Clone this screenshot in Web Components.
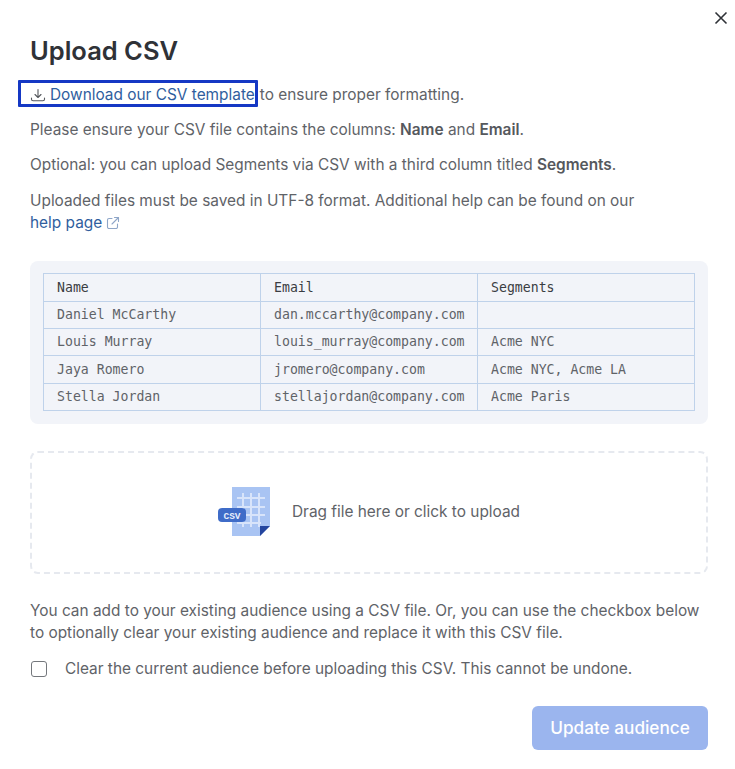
<!DOCTYPE html>
<html><head><meta charset="utf-8">
<style>
html,body{margin:0;padding:0;background:#fff}
body{width:735px;height:769px;overflow:hidden;font-family:Inter,"Liberation Sans",sans-serif}
</style></head><body>
<upload-dialog>
  <span slot="title">Upload CSV</span>
</upload-dialog>
<template id="dlg">
<style>
:host{display:block;position:relative;width:735px;height:769px;box-sizing:border-box;padding:35px 27px 0 30px;color:#5f6368;font:15.4px/22px Inter,"Liberation Sans",sans-serif;letter-spacing:0}
h1{margin:0;font-size:25.500px;line-height:32px;font-weight:600;color:#2f3237}
.close{position:absolute;top:11px;right:7px;width:14px;height:14px;display:block}
p{margin:0}
.l1{margin-top:17px;height:22px;display:flex;align-items:center}
a{color:#2f5e9e;text-decoration:none}
.dl{position:relative;display:flex;align-items:center;gap:4px;white-space:nowrap}
.dl::before{content:"";position:absolute;left:-12px;top:-4px;width:234px;height:21px;border:3px solid #1538c4;border-radius:1px}
.dl svg{width:16px;height:16px;flex:none}
.l1 .rest{margin-left:5px}
.p2{margin-top:13px}.p3{margin-top:13px}.p4{margin-top:14px}
b{font-weight:600;color:#55585d}
.ext{width:14px;height:14px;vertical-align:-2px;margin-left:4px}
.panel{margin-top:27px}
.zone{margin-top:27px}
.p5{margin-top:26px}
.chk{margin-top:14px}
.foot{margin-top:26px;display:flex;justify-content:flex-end}
</style>
<h1><slot name="title"></slot></h1>
<svg class="close" viewBox="0 0 14 14"><path d="M1.5 1.5l11 11M12.5 1.5l-11 11" stroke="#2f3237" stroke-width="1.6" fill="none"/></svg>
<div class="l1"><a class="dl" href="#"><svg viewBox="0 0 16 16" fill="none" stroke="#55585d" stroke-width="1.1" stroke-linecap="round" stroke-linejoin="round"><path d="M8 2.5v7.5M5 7.5l3 3 3-3M1.500 11v1.200c0 .9.7 1.600 1.600 1.600h9.800c.9 0 1.600-.7 1.600-1.600V11"/></svg>Download our CSV template</a><span class="rest">to ensure proper formatting.</span></div>
<p class="p2">Please ensure your CSV file contains the columns: <b>Name</b> and <b>Email</b>.</p>
<p class="p3">Optional: you can upload Segments via CSV with a third column titled <b>Segments</b>.</p>
<p class="p4">Uploaded files must be saved in UTF-8 format. Additional help can be found on our<br><a href="#">help page</a><svg class="ext" viewBox="0 0 14 14" fill="none" stroke="#8fa6c8" stroke-width="1.1" stroke-linecap="round" stroke-linejoin="round"><path d="M6 2.500H3A1.500 1.500 0 0 0 1.500 4v7A1.500 1.500 0 0 0 3 12.500h7a1.500 1.500 0 0 0 1.500-1.500V8M8.500 1.500h4v4M12.500 1.500L6 8"/></svg></p>
<csv-sample class="panel"></csv-sample>
<drop-zone class="zone"></drop-zone>
<p class="p5">You can add to your existing audience using a CSV file. Or, you can use the checkbox below<br>to optionally clear your existing audience and replace it with this CSV file.</p>
<check-row class="chk">Clear the current audience before uploading this CSV. This cannot be undone.</check-row>
<div class="foot"><action-button>Update audience</action-button></div>
</template>
<template id="csv">
<style>
:host{display:block;background:#f2f4f9;border-radius:8px;padding:12px 13px 13px}
table{border-collapse:collapse;width:100%;table-layout:fixed;font:13.2px/16px "DejaVu Sans Mono","Liberation Mono",monospace;color:#5f6368}
td{border:1px solid #bfd2ea;padding:0 0 0 13px;height:27px;box-sizing:border-box;white-space:nowrap;overflow:hidden}
tr:first-child td,tr.t td{height:28px}
tr:first-child td{color:#3a3d42}
.a{width:217px}.b{width:217px}
</style>
<table><colgroup><col class="a"><col class="b"><col></colgroup>
<tr><td>Name</td><td>Email</td><td>Segments</td></tr>
<tr><td>Daniel McCarthy</td><td>dan.mccarthy@company.com</td><td></td></tr>
<tr><td>Louis Murray</td><td>louis_murray@company.com</td><td>Acme NYC</td></tr>
<tr class="t"><td>Jaya Romero</td><td>jromero@company.com</td><td>Acme NYC, Acme LA</td></tr>
<tr><td>Stella Jordan</td><td>stellajordan@company.com</td><td>Acme Paris</td></tr>
</table>
</template>
<template id="dz">
<style>
:host{display:flex;align-items:center;justify-content:center;gap:22px;height:123px;box-sizing:border-box;border:2px dashed #e6e9ef;border-radius:8px;color:#5f6368;font-size:15.4px;padding-bottom:2px}
svg{width:52px;height:50px;flex:none}
.t{font:700 9.500px "Liberation Mono",monospace;fill:#e6eefc}
</style>
<svg viewBox="0 0 52 50">
<path d="M14 0h38v49H14z" fill="#a9c4f3"/>
<path d="M42 49l10-10v10z" fill="#fff"/>
<path d="M42 49l10-10H42z" fill="#24459e"/>
<g stroke="#d8e4fa" stroke-width="2" fill="none"><path d="M19 11h28M19 20h28M19 28h28M19 36h24M25 6v34M33 6v34M41 6v34"/></g>
<rect x="0" y="21" width="28" height="14" rx="4" fill="#3f6cc8"/>
<text class="t" x="14" y="31.500" text-anchor="middle">CSV</text>
</svg>
<span>Drag file here or click to upload</span>
</template>
<template id="ck">
<style>
:host{display:flex;align-items:center;gap:18px}
i{display:block;width:14px;height:14px;border:1.500px solid #74777c;border-radius:3px;margin-left:1px;flex:none}
</style><i></i><span><slot></slot></span>
</template>
<template id="btn">
<style>
:host{display:block;width:176px;height:44px;background:#9bb5ee;border-radius:6px;color:#fff;font-size:17.2px;font-weight:500;line-height:44px;text-align:center}
</style><slot></slot>
</template>
<script>
const def=(name,id)=>customElements.define(name,class extends HTMLElement{constructor(){super();this.attachShadow({mode:'open'}).appendChild(document.getElementById(id).content.cloneNode(true))}});
def('csv-sample','csv');def('drop-zone','dz');def('check-row','ck');def('action-button','btn');def('upload-dialog','dlg');
</script>
</body></html>
